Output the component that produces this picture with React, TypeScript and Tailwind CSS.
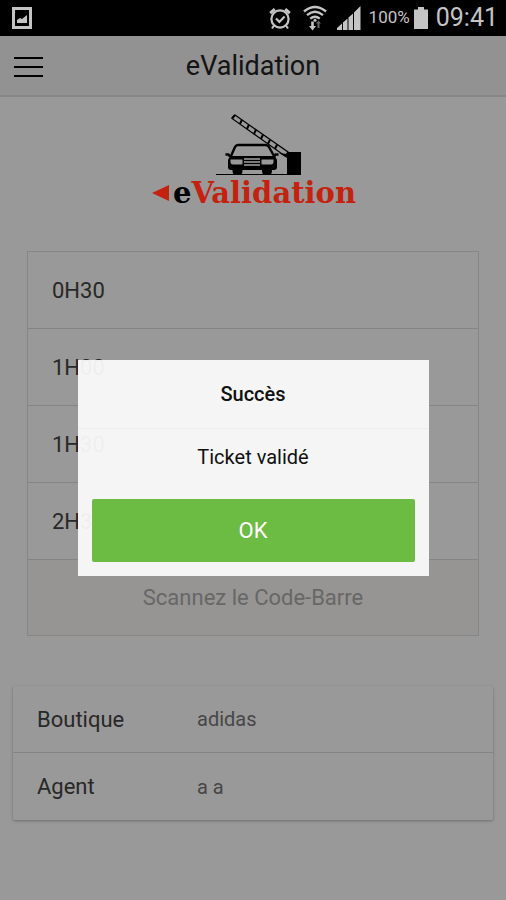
import { useState } from 'react'

const durations = ['0H30', '1H00', '1H30', '2H30']

const details = [
  { label: 'Boutique', value: 'adidas' },
  { label: 'Agent', value: 'a a' },
]

function StatusBar() {
  return (
    <div className="flex h-9 shrink-0 items-center bg-black pr-2 pl-3 text-[#c4c4c4]">
      <svg width="20" height="22" viewBox="0 0 20 22" aria-hidden="true">
        <path d="M0 0h20v22H0zM3 3v16h14V3z" fill="currentColor" fillRule="evenodd" />
        <path d="M5 16v-3l3-2 2 1 5-4v8z" fill="currentColor" />
      </svg>
      <div className="ml-auto flex items-center">
        <svg width="22" height="23" viewBox="0 0 22 23" fill="none" stroke="currentColor" aria-hidden="true">
          <circle cx="11" cy="12" r="8.6" strokeWidth="2.2" />
          <path d="M7 11.5l3.4 3.4 5.2-5.4" strokeWidth="2.2" />
          <path d="M1.2 6.2l4.6-4M20.8 6.2l-4.6-4" strokeWidth="3" />
          <path d="M5 18.5l-2 3M17 18.5l2 3" strokeWidth="2" />
        </svg>
        <svg className="ml-3" width="24" height="26" viewBox="0 0 24 26" fill="none" stroke="currentColor" aria-hidden="true">
          <path d="M1 6.5Q12-2.5 23 6.5M4 10.2Q12 3.5 20 10.2M7.2 13.6Q12 9.8 16.8 13.6" strokeWidth="2.4" />
          <circle cx="12" cy="15.2" r="1.5" fill="currentColor" stroke="none" />
          <path d="M8.2 16.5h2.6v4.5h2.2l-3.5 4.5L6 21h2.2z" fill="currentColor" stroke="none" />
          <path d="M14.5 23v-4.5H13l2.5-3 2.5 3h-1.5V23z" fill="#666" stroke="none" />
        </svg>
        <svg className="ml-2.5" width="24" height="24" viewBox="0 0 24 24" fill="currentColor" aria-hidden="true">
          <path d="M0 24v-2l5-4.5V24zM6 24v-7.5l4.5-4V24zM11.5 24V11.5l4.5-4V24zM17 24V6.5L23.5 0v24z" />
        </svg>
        <span className="ml-2 text-[17px]">100%</span>
        <svg className="ml-1" width="14" height="22" viewBox="0 0 14 22" fill="currentColor" aria-hidden="true">
          <path d="M4 0h6v2.500h4V22H0V2.500h4z" />
        </svg>
        <span className="ml-2 text-[25px]">09:41</span>
      </div>
    </div>
  )
}

function Logo() {
  return (
    <div className="flex flex-col items-center pt-4">
      <svg className="ml-3.5" width="90" height="64" viewBox="0 0 90 64" fill="none" stroke="#000" aria-hidden="true">
        {/* barrier arm */}
        <path d="M20 2l53 37-3 4L17 5.5z" strokeWidth="1.2" />
        <path
          d="M20 2L17 5.5M27 6.8l-2 4M34 11.8l-2 4M41 16.8l-2 4M48 21.8l-2 4M55 26.8l-2 4M62 31.8l-2 4"
          strokeWidth="2"
        />
        {/* post */}
        <path d="M72 39h14v23H72V45l-8-5 8 1z" fill="#000" stroke="none" />
        <path d="M1 61.5h85" strokeWidth="1" />
        {/* car */}
        <path d="M16 43l4-9q1-2 3-2h27q3 0 4 2l5 9" strokeWidth="2.4" />
        <path d="M10.5 41.5h3l1.5 2M63.5 41.5h-3l-1.5 2" strokeWidth="2.4" />
        <path d="M15 43h45l2 4v7q0 3-3 3H16q-3 0-3-3v-7z" fill="#000" stroke="none" />
        <path d="M15.5 46.5h12v5H18q-2 0-2.5-2zM46.500 46.500h12v3q-.5 2-2.500 2h-9.500z" fill="#fff" stroke="none" />
        <path d="M29 45h16v2H29zM29 48h16v2H29zM29 51h16v2H29z" fill="#ccc" stroke="none" />
        <path d="M17.500 55h10v3q0 4-4 4h-2q-4 0-4-4zM47 55h10v3q0 4-4 4h-2q-4 0-4-4z" fill="#000" stroke="none" />
      </svg>
      {/* the wordmark stays above the backdrop so it keeps its own red */}
      <div className="relative z-10 ml-0.5 flex items-center text-[#c4220f]">
        <svg className="mr-1" width="17" height="16" viewBox="0 0 17 16" aria-hidden="true">
          <path d="M17 0v16L0 8z" fill="currentColor" />
        </svg>
        <span className="font-['DejaVu_Serif',serif] text-[29px] leading-8 font-bold">
          <span className="text-black">e</span>Validation
        </span>
      </div>
    </div>
  )
}

function SuccessDialog({ onClose }: { onClose: () => void }) {
  return (
    <div className="absolute inset-0 flex items-center justify-center bg-black/40">
      <div
        role="alertdialog"
        aria-labelledby="dialog-title"
        aria-describedby="dialog-message"
        className="w-full max-w-[351px] bg-[#fafafa]/95 text-center text-[#111]"
      >
        <h2 id="dialog-title" className="border-b border-[#ececec] py-5 text-xl leading-7 font-medium">
          Succès
        </h2>
        <p id="dialog-message" className="px-4 py-3 text-xl leading-8">
          Ticket validé
        </p>
        <div className="p-3.5">
          <button
            type="button"
            onClick={onClose}
            className="h-[63px] w-full rounded-xs bg-[#6cbb43] text-[22px] text-white"
          >
            OK
          </button>
        </div>
      </div>
    </div>
  )
}

export default function App() {
  const [open, setOpen] = useState(true)

  return (
    <div className="flex min-h-screen flex-col font-[Roboto,sans-serif]">
      <StatusBar />
      <div className="relative flex-1 bg-white text-[#444]">
        <header className="grid h-[61px] grid-cols-[1fr_auto_1fr] items-center border-b-2 border-[#e0e0e0] bg-[#f3f3f3] px-3.5 pt-0.5">
          <button type="button" aria-label="Menu" className="flex w-[29px] flex-col gap-[7px]">
            <span className="h-0.5 w-full bg-black" />
            <span className="h-0.5 w-full bg-black" />
            <span className="h-0.5 w-full bg-black" />
          </button>
          <h1 className="text-[27px] text-[#222]">eValidation</h1>
        </header>

        <Logo />

        <section className="mx-[27px] mt-[42px] border border-[#e0e0e0]">
          <ul>
            {durations.map((duration) => (
              <li key={duration} className="border-b border-[#dcdcdc]">
                <button type="button" className="h-[76px] w-full px-6 text-left text-[22px]">
                  {duration}
                </button>
              </li>
            ))}
          </ul>
          <button type="button" disabled className="h-[75px] w-full bg-[#fbf8f5] text-[22px] text-[#acacac]">
            Scannez le Code-Barre
          </button>
        </section>

        <dl className="mx-[13px] mt-[50px] rounded-xs shadow-[0_1px_3px_rgba(0,0,0,0.3)]">
          {details.map((detail) => (
            <div
              key={detail.label}
              className="flex h-[67px] items-center border-b border-[#dcdcdc] px-6 last:border-b-0"
            >
              <dt className="w-40 text-[22px]">{detail.label}</dt>
              <dd className="text-xl text-[#777]">{detail.value}</dd>
            </div>
          ))}
        </dl>

        {open && <SuccessDialog onClose={() => setOpen(false)} />}
      </div>
    </div>
  )
}
